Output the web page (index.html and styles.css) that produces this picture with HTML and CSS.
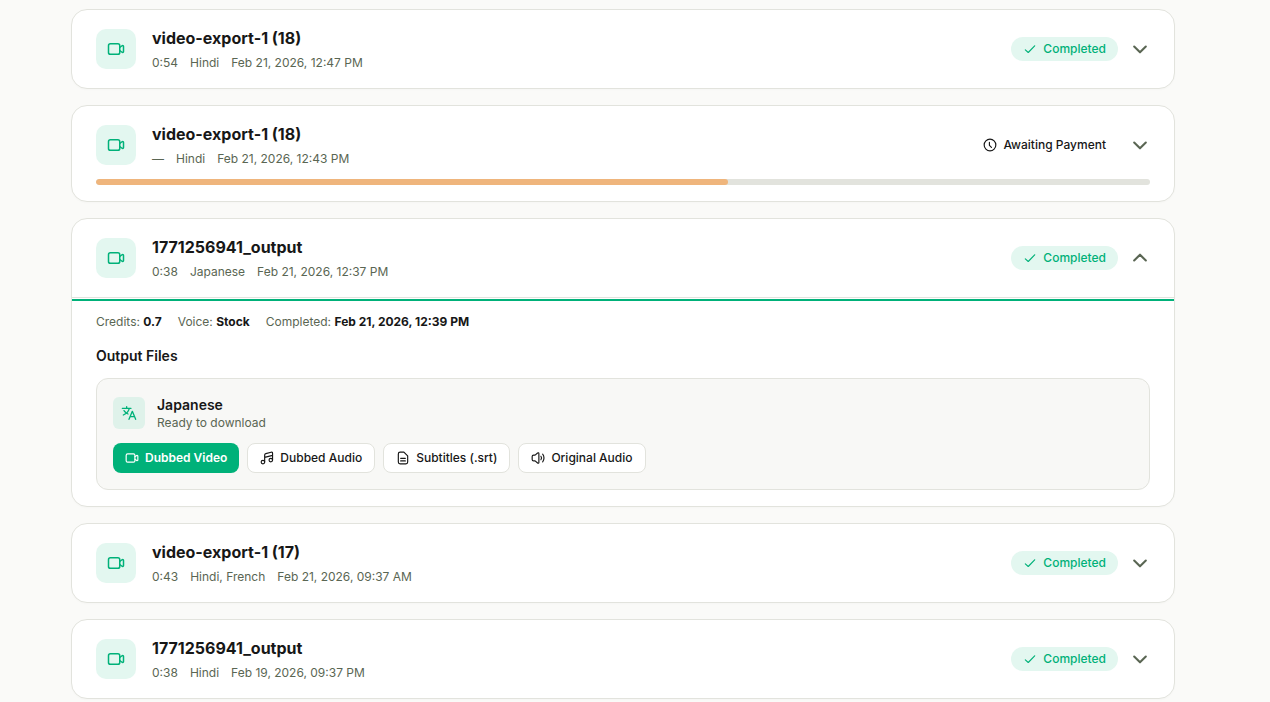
FILE: index.html
```html
<!DOCTYPE html>
<html lang="en">
<head>
    <meta charset="UTF-8">
    <meta name="viewport" content="width=device-width, initial-scale=1">
    <title>Dubbing Projects</title>
    <link rel="stylesheet" href="styles.css">
</head>
<body>
    <svg class="sprite" aria-hidden="true">
        <symbol id="i-video" viewBox="0 0 24 24">
            <rect x="2" y="5" width="15" height="14" rx="2.5"/>
            <path d="M17 10l3-2.300c.9-.6 2-.1 2 1v6.600c0 1.100-1.100 1.600-2 1L17 14"/>
        </symbol>
        <symbol id="i-check" viewBox="0 0 24 24">
            <path d="M4 13.500l5 4.500L20 6.500"/>
        </symbol>
        <symbol id="i-clock" viewBox="0 0 24 24">
            <circle cx="12" cy="12" r="10"/>
            <path d="M11 7.500v5l3.500 3.500"/>
        </symbol>
        <symbol id="i-chevron" viewBox="0 0 24 24">
            <path d="M5 9l7 7 7-7"/>
        </symbol>
        <symbol id="i-translate" viewBox="0 0 24 24">
            <path d="M2 5h13M8.500 2.500V5M12.500 5c-1.200 4.500-4.500 8-9 10M4.500 8.500c1.500 2.500 3.500 4 6 5M12 21.500l5-12 5 12M13.800 17.500h6.400"/>
        </symbol>
        <symbol id="i-music" viewBox="0 0 24 24">
            <circle cx="5" cy="19" r="3"/>
            <circle cx="18.500" cy="15.500" r="3"/>
            <path d="M8 19V7c0-1.500.6-2.200 2-2.600l9-2.300c1.600-.4 2.500.2 2.500 1.900v11.500M8 11l13.500-3.500"/>
        </symbol>
        <symbol id="i-file" viewBox="0 0 24 24">
            <path d="M4 5a3 3 0 0 1 3-3h6.500L20 8.500V19a3 3 0 0 1-3 3H7a3 3 0 0 1-3-3zM8 12.500h8M8 17h8"/>
        </symbol>
        <symbol id="i-volume" viewBox="0 0 24 24">
            <path d="M13.500 4.500v15c0 1.500-1 2-2.200 1L7 17H4.500C3 17 2 16 2 14.500v-5C2 8 3 7 4.500 7H7l4.300-3.500c1.200-1 2.200-.5 2.200 1zM17 9c1.300 1.700 1.300 4.300 0 6M20 5.500c3 3.500 3 9.500 0 13"/>
        </symbol>
    </svg>

    <main class="projects">
        <article class="card">
            <header class="card-header">
                <span class="thumb"><svg><use href="#i-video"/></svg></span>
                <div class="info">
                    <h2>video-export-1 (18)</h2>
                    <p class="meta"><span>0:54</span><span>Hindi</span><span>Feb 21, 2026, 12:47 PM</span></p>
                </div>
                <span class="badge completed"><svg><use href="#i-check"/></svg>Completed</span>
                <button class="toggle" type="button" aria-expanded="false" aria-label="Show details"><svg><use href="#i-chevron"/></svg></button>
            </header>
        </article>

        <article class="card">
            <header class="card-header has-progress">
                <span class="thumb"><svg><use href="#i-video"/></svg></span>
                <div class="info">
                    <h2>video-export-1 (18)</h2>
                    <p class="meta"><span>—</span><span>Hindi</span><span>Feb 21, 2026, 12:43 PM</span></p>
                </div>
                <span class="badge"><svg><use href="#i-clock"/></svg>Awaiting Payment</span>
                <button class="toggle" type="button" aria-expanded="false" aria-label="Show details"><svg><use href="#i-chevron"/></svg></button>
            </header>
            <div class="progress"><div class="progress-bar" style="width: 60%"></div></div>
        </article>

        <article class="card">
            <header class="card-header">
                <span class="thumb"><svg><use href="#i-video"/></svg></span>
                <div class="info">
                    <h2>1771256941_output</h2>
                    <p class="meta"><span>0:38</span><span>Japanese</span><span>Feb 21, 2026, 12:37 PM</span></p>
                </div>
                <span class="badge completed"><svg><use href="#i-check"/></svg>Completed</span>
                <button class="toggle" type="button" aria-expanded="true" aria-label="Hide details"><svg><use href="#i-chevron"/></svg></button>
            </header>
            <div class="details">
                <div class="details-body">
                    <p class="facts">
                        <span>Credits: <strong>0.7</strong></span>
                        <span>Voice: <strong>Stock</strong></span>
                        <span>Completed: <strong>Feb 21, 2026, 12:39 PM</strong></span>
                    </p>
                    <h3>Output Files</h3>
                    <section class="output">
                        <div class="output-header">
                            <span class="lang-icon"><svg><use href="#i-translate"/></svg></span>
                            <div>
                                <h4>Japanese</h4>
                                <p>Ready to download</p>
                            </div>
                        </div>
                        <div class="downloads">
                            <button class="btn primary" type="button"><svg><use href="#i-video"/></svg>Dubbed Video</button>
                            <button class="btn" type="button"><svg><use href="#i-music"/></svg>Dubbed Audio</button>
                            <button class="btn" type="button"><svg><use href="#i-file"/></svg>Subtitles (.srt)</button>
                            <button class="btn" type="button"><svg><use href="#i-volume"/></svg>Original Audio</button>
                        </div>
                    </section>
                </div>
            </div>
        </article>

        <article class="card">
            <header class="card-header">
                <span class="thumb"><svg><use href="#i-video"/></svg></span>
                <div class="info">
                    <h2>video-export-1 (17)</h2>
                    <p class="meta"><span>0:43</span><span>Hindi, French</span><span>Feb 21, 2026, 09:37 AM</span></p>
                </div>
                <span class="badge completed"><svg><use href="#i-check"/></svg>Completed</span>
                <button class="toggle" type="button" aria-expanded="false" aria-label="Show details"><svg><use href="#i-chevron"/></svg></button>
            </header>
        </article>

        <article class="card">
            <header class="card-header">
                <span class="thumb"><svg><use href="#i-video"/></svg></span>
                <div class="info">
                    <h2>1771256941_output</h2>
                    <p class="meta"><span>0:38</span><span>Hindi</span><span>Feb 19, 2026, 09:37 PM</span></p>
                </div>
                <span class="badge completed"><svg><use href="#i-check"/></svg>Completed</span>
                <button class="toggle" type="button" aria-expanded="false" aria-label="Show details"><svg><use href="#i-chevron"/></svg></button>
            </header>
        </article>
    </main>
</body>
</html>
```
FILE: styles.css
```css
* { box-sizing: border-box; }
body { margin: 0; background: #fafaf8; color: #171717; font-family: Inter, "Liberation Sans", sans-serif; font-size: 12px; }
h2, h3, h4, p { margin: 0; }
svg { display: block; flex: none; fill: none; stroke: currentColor; stroke-width: 2; stroke-linecap: round; stroke-linejoin: round; }
.sprite { display: none; }

.projects { display: flex; flex-direction: column; gap: 16px; padding: 9px 95px 4px 71px; }

.card { background: #fff; border: 1px solid #e2e3dd; border-radius: 16px; box-shadow: 0 1px 2px rgba(0, 0, 0, 0.02); }
.card-header { display: flex; align-items: center; padding: 16px 24px; }
.card-header.has-progress { padding-bottom: 11px; }

.thumb { display: flex; align-items: center; justify-content: center; width: 40px; height: 40px; border-radius: 10px; background: #e3f7f0; color: #00b179; }
.thumb svg { width: 18px; height: 18px; }

.info { flex: 1; margin-left: 16px; }
.info h2 { font-size: 16px; font-weight: 700; line-height: 24px; }
.meta { display: flex; gap: 12px; margin-top: 4px; line-height: 18px; color: #5a6653; }

.badge { display: flex; align-items: center; gap: 6px; height: 24px; padding: 0 12px; border-radius: 12px; font-weight: 500; line-height: 16px; }
.badge svg { width: 14px; height: 14px; }
.badge.completed { background: #e3f7f0; color: #00b179; }

.toggle { margin-left: 12px; padding: 0; border: 0; background: none; color: #5a6653; cursor: pointer; }
.toggle svg { width: 20px; height: 20px; stroke-width: 2.5; }
.toggle[aria-expanded="true"] svg { transform: rotate(180deg); }

.progress { height: 6px; margin: 0 24px 16px; border-radius: 3px; background: #e2e3dd; overflow: hidden; }
.progress-bar { height: 100%; border-radius: 3px; background: #efb57c; }

.details { padding-top: 1px; border-top: 1px solid #e2e3dd; }
.details-body { padding: 12px 24px 16px; border-top: 2px solid #00b179; }
.facts { display: flex; gap: 16px; line-height: 17px; color: #5a6653; }
.facts strong { font-weight: 700; color: #171717; }
.details h3 { margin: 16px 0 12px; font-size: 14px; font-weight: 600; line-height: 20px; }

.output { padding: 16px; border: 1px solid #e2e3dd; border-radius: 12px; background: #f8f8f6; }
.output-header { display: flex; align-items: center; gap: 12px; }
.output-header h4 { font-size: 14px; font-weight: 600; line-height: 20px; }
.output-header p { line-height: 16px; color: #5a6653; }
.lang-icon { display: flex; align-items: center; justify-content: center; width: 32px; height: 32px; border-radius: 6px; background: #dff2ea; color: #00b179; }
.lang-icon svg { width: 16px; height: 16px; }

.downloads { display: flex; flex-wrap: wrap; gap: 8px; margin-top: 12px; }
.btn { display: flex; align-items: center; gap: 6px; height: 30px; padding: 0 12px; border: 1px solid #e2e3dd; border-radius: 8px; background: #fff; color: #171717; font: 500 12px/16px Inter, "Liberation Sans", sans-serif; cursor: pointer; }
.btn svg { width: 14px; height: 14px; }
.btn.primary { border: 0; background: #00b179; color: #fff; font-weight: 600; }
```
